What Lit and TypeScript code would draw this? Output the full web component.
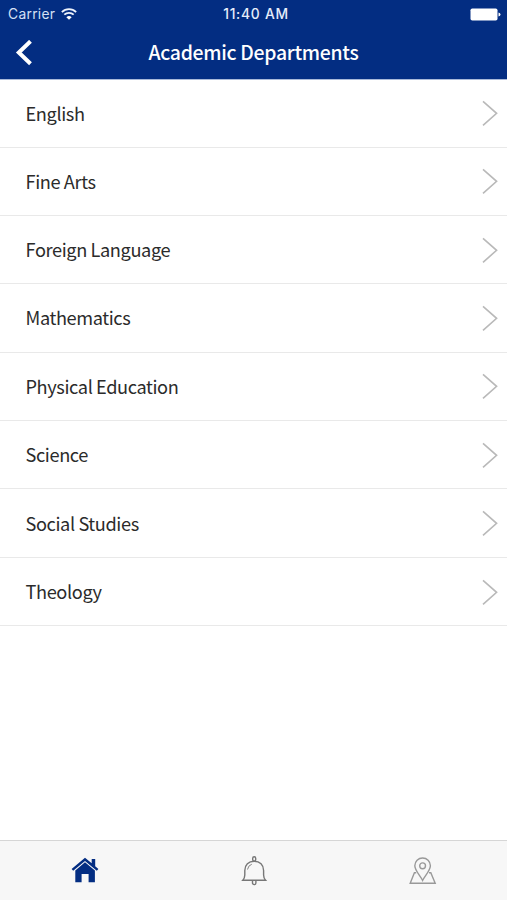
import { LitElement, html, css } from "lit";
import { customElement } from "lit/decorators.js";

const departments = [
  "English",
  "Fine Arts",
  "Foreign Language",
  "Mathematics",
  "Physical Education",
  "Science",
  "Social Studies",
  "Theology",
];

@customElement("app-root")
export class AppRoot extends LitElement {
  static styles = css`
    :host {
      display: flex;
      flex-direction: column;
      height: 900px;
      background: #fff;
      color: #2b2b2b;
      font-family: "Noto Sans CJK SC", "Noto Sans", sans-serif;
      overflow: hidden;
    }
    svg {
      display: block;
      flex: none;
    }
    header {
      flex: none;
      height: 79px;
      box-sizing: border-box;
      background: #032d82;
      color: #fff;
    }
    .status {
      display: grid;
      grid-template-columns: 1fr auto 1fr;
      align-items: center;
      height: 27px;
      padding: 0 6px 0 8px;
      font: 400 13.8px/28px Inter, "Liberation Sans", sans-serif;
    }
    .carrier {
      display: flex;
      align-items: center;
      gap: 6px;
      letter-spacing: 0.3px;
      color: #d5e0f5;
    }
    .time {
      padding-left: 3px;
      font-size: 13.8px;
      font-weight: 500;
      letter-spacing: 0.75px;
      color: #e6edfa;
    }
    .battery {
      justify-self: end;
    }
    .nav {
      display: grid;
      grid-template-columns: 48px 1fr 48px;
      align-items: center;
      height: 51px;
    }
    .back {
      padding-left: 15px;
    }
    h1 {
      margin: 0;
      padding-bottom: 2px;
      text-align: center;
      font-size: 19.4px;
      line-height: 49px;
      font-weight: 500;
      letter-spacing: -0.29px;
    }
    ul {
      flex: 1;
      margin: 0;
      padding: 0;
      list-style: none;
      border-top: 1px solid #a9b9d9;
    }
    li {
      display: flex;
      align-items: center;
      justify-content: space-between;
      box-sizing: border-box;
      height: 68.4px;
      padding: 0 9px 0 25.5px;
      border-bottom: 1px solid #e9e9e9;
      font-size: 18.2px;
      letter-spacing: -0.39px;
    }
    li:first-child {
      height: 67.5px;
    }
    .label {
      margin-top: -1px;
    }
    .tabs {
      flex: none;
      display: grid;
      grid-template-columns: repeat(3, 1fr);
      justify-items: center;
      box-sizing: border-box;
      height: 60px;
      padding-top: 14px;
      background: #f7f7f7;
      border-top: 1px solid #d6d6d6;
    }
  `;

  render() {
    return html`
      <header>
        <div class="status">
          <div class="carrier">
            <span>Carrier</span>
            <svg width="16" height="13" viewBox="0 0 15 12" fill="none" stroke="#eef3fc" stroke-width="1.7">
              <path d="M.8 3.700a9.600 9.600 0 0 1 13.400 0M3.100 6.200a6.300 6.300 0 0 1 8.800 0" />
              <path d="M7.500 11 5 8.500a3.600 3.600 0 0 1 5 0z" fill="#fff" stroke="none" />
            </svg>
          </div>
          <span class="time">11:40 AM</span>
          <svg class="battery" width="31" height="13" viewBox="0 0 31 13" fill="#fff">
            <rect x=".5" y=".5" width="27" height="12" rx="1.8" />
            <path d="M28.500 4.500q2 .3 2 2t-2 2z" />
          </svg>
        </div>
        <div class="nav">
          <svg class="back" width="18" height="26" viewBox="0 0 18 26" fill="none" stroke="#fff" stroke-width="4">
            <path d="M15.500 1.300 3.800 12.500l11.700 11.200" />
          </svg>
          <h1>Academic Departments</h1>
        </div>
      </header>
      <ul>
        ${departments.map(
          (name) => html`
            <li>
              <span class="label">${name}</span>
              <svg width="16" height="26" viewBox="0 0 16 26" fill="none" stroke="#b9b9b9" stroke-width="1.6">
                <path d="M1 1.300l13.600 12L1 25.300" />
              </svg>
            </li>
          `
        )}
      </ul>
      <nav class="tabs">
        <svg width="28" height="32" viewBox="0 0 28 32" fill="#032d82">
          <path d="M14 2.700.6 14l1.600 1.800L14 5.900l11.800 9.900 1.600-1.800-3.200-2.700V4h-3.500v4.300z" />
          <path d="M14 7.300 4.300 15.500V27.300h6.300v-8.200h7v8.200h6.300V15.500z" />
        </svg>
        <svg width="28" height="32" viewBox="0 0 28 32" fill="none" stroke="#777" stroke-width="1.4">
          <path d="M2.800 25.200q2-2.200 2-5.200v-4.500C4.800 10 8.500 6.300 14.200 6.300s9.400 3.700 9.400 9.200V20q0 3 2 5.200z" />
          <rect x="12.700" y="1.800" width="3" height="4.500" rx="1.500" />
          <path d="M12.500 25.500v2.400a1.700 1.700 0 0 0 3.400 0v-2.400" />
          <path d="M7.500 14.500q.6-4 4.300-5.300" stroke-width=".9" />
        </svg>
        <svg width="28" height="32" viewBox="0 0 28 32" fill="none" stroke="#999" stroke-width="1.4">
          <path d="M13.600 25.500C11.100 20.500 5.800 15.500 5.800 10.800a7.800 7.800 0 0 1 15.600 0c0 4.700-5.300 9.700-7.800 14.700z" />
          <circle cx="13.600" cy="10.800" r="2.900" />
          <path d="M7.200 17.800H5.400L1.200 28.300h25l-4.400-10.500H20" />
        </svg>
      </nav>
    `;
  }
}
